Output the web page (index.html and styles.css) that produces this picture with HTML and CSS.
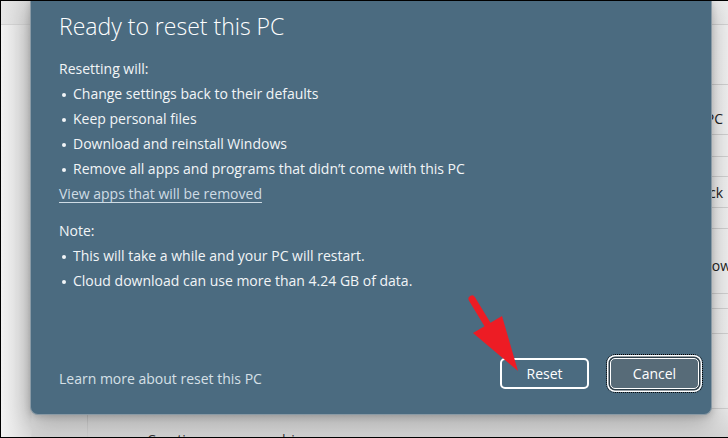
FILE: index.html
```html
<!DOCTYPE html>
<html>
<head>
<meta charset="utf-8">
<link rel="stylesheet" href="styles.css">
</head>
<body>
<div class="frame">
  <div class="bg">
    <div class="bg-top"></div>
    <div class="bg-main">
      <div class="bg-nav"></div>
      <div class="bg-list">
        <div class="row r1"></div>
        <div class="row r2"><span class="frag">PC</span></div>
        <div class="row r3"></div>
        <div class="row r4"></div>
        <div class="row r5"><span class="frag">ck</span></div>
        <div class="row r6"></div>
        <div class="row r7"><span class="frag wide">now</span></div>
        <div class="row r8"></div>
        <div class="row r9"></div>
        <div class="row r10"></div>
        <div class="row r11"><span class="recovery">Creating a recovery drive</span></div>
      </div>
    </div>
  </div>

  <div class="dialog">
    <h1 class="title">Ready to reset this PC</h1>
    <p class="label">Resetting will:</p>
    <ul class="bullets">
      <li>Change settings back to their defaults</li>
      <li>Keep personal files</li>
      <li>Download and reinstall Windows</li>
      <li>Remove all apps and programs that didn’t come with this PC</li>
    </ul>
    <a class="link" href="#">View apps that will be removed</a>
    <p class="label note">Note:</p>
    <ul class="bullets">
      <li>This will take a while and your PC will restart.</li>
      <li>Cloud download can use more than 4.24 GB of data.</li>
    </ul>
    <div class="footer">
      <span class="learn">Learn more about reset this PC</span>
      <div class="actions">
        <button class="btn reset">Reset</button>
        <button class="btn cancel">Cancel</button>
      </div>
    </div>
  </div>

  <svg class="arrow" width="60" height="80" viewBox="0 0 60 80">
    <line x1="5" y1="6" x2="22" y2="34" stroke="#ed1c24" stroke-width="7" stroke-linecap="round"/>
    <polygon points="6,40 35,23 51,78" fill="#ed1c24"/>
  </svg>
</div>
</body>
</html>
```

FILE: styles.css
```css
* { box-sizing: border-box; }
html, body { margin: 0; padding: 0; }
body {
  width: 728px;
  height: 438px;
  overflow: hidden;
  font-family: "Open Sans", "Noto Sans", sans-serif;
  background: #000;
}
.frame {
  position: relative;
  width: 728px;
  height: 438px;
  border-top: 1px solid #000;
  border-left: 1px solid #000;
  border-bottom: 1px solid #000;
  overflow: hidden;
  background: #ebebeb;
}
.bg {
  display: flex;
  flex-direction: column;
  height: 100%;
}
.bg-top {
  height: 24px;
  flex: none;
  background: linear-gradient(to right, #e6e6e6, #d9d9d9 30px, #e9e9e9 700px, #ececec);
  border-bottom: 1px solid #d2d2d2;
}
.bg-main {
  flex: 1;
  display: flex;
  background: linear-gradient(to bottom, #f0f0f0 0, #ededed 380px, #cfcfcf 418px, #e2e2e2 437px);
}
.bg-nav {
  width: 87px;
  flex: none;
  border-right: 1px solid #d0d0d0;
  background: linear-gradient(to right, #f2f2f2, #dcdcdc 30px, transparent 31px);
}
.bg-list {
  flex: 1;
  display: flex;
  flex-direction: column;
}
.row {
  flex: none;
  border-bottom: 1px solid #cfcfcf;
  display: flex;
  align-items: center;
  justify-content: flex-end;
  font-size: 14px;
  color: #222;
}
.r1 { height: 60px; }
.r2 { height: 50px; padding-top: 18px; }
.r3 { height: 22px; }
.r4 { height: 20px; }
.r5 { height: 31px; }
.r6 { height: 21px; }
.r7 { height: 65px; padding-top: 8px; }
.r8 { height: 15px; }
.r9 { height: 25px; }
.r10 { height: 75px; }
.r11 { flex: 1; border-bottom: none; align-items: flex-end; justify-content: flex-start; }
.frag { margin-right: 5px; }
.frag.wide { margin-right: -3px; }
.recovery {
  margin-left: 59px;
  margin-bottom: -12px;
  font-size: 14px;
  color: #333;
}

.dialog {
  position: absolute;
  left: 29px;
  top: -1px;
  width: 682px;
  height: 415px;
  background: #4b6b80;
  border: 1px solid #8a9aa5;
  border-top: none;
  border-radius: 0 0 8px 8px;
  box-shadow: 0 8px 24px rgba(0,0,0,0.28), 0 2px 6px rgba(0,0,0,0.15);
  padding: 10px 28px 0 28px;
  display: flex;
  flex-direction: column;
  color: #fff;
}
.title {
  margin: 0;
  font-size: 23px;
  font-weight: 300;
  line-height: 32px;
  color: #fff;
}
.label {
  margin: 14px 0 0;
  font-size: 14px;
  line-height: 25px;
  color: #f2f5f7;
}
.note { margin-top: 12px; }
.bullets {
  margin: 0;
  padding: 0;
  list-style: none;
  font-size: 14px;
  line-height: 25px;
  color: #f2f5f7;
}
.bullets li {
  position: relative;
  padding-left: 14px;
}
.bullets li::before {
  content: "";
  position: absolute;
  left: 3px;
  top: 12px;
  width: 4px;
  height: 4px;
  border-radius: 50%;
  background: #f2f5f7;
}
.link {
  align-self: flex-start;
  font-size: 14px;
  line-height: 25px;
  color: #cfdce5;
  text-decoration: underline;
  text-underline-offset: 3px;
}
.footer {
  margin-top: auto;
  margin-bottom: 25px;
  display: flex;
  align-items: center;
  justify-content: space-between;
}
.learn {
  font-size: 14px;
  padding-top: 9px;
  color: #d6e0e7;
}
.actions {
  display: flex;
  gap: 21px;
  margin-right: -16px;
}
.btn {
  width: 89px;
  height: 31px;
  font-family: inherit;
  font-size: 14px;
  color: #fff;
  border-radius: 5px;
  padding: 0;
}
.reset {
  background: transparent;
  border: 2px solid #fff;
}
.cancel {
  border: 1.5px solid #fff;
  box-shadow: 0 0 0 1.5px #2c3d48, 0 0 0 3px #fff;
  outline: 1px dotted #000;
  outline-offset: 3px;
  background-color: #576b78;
}

.arrow {
  position: absolute;
  left: 466px;
  top: 292px;
}
```
